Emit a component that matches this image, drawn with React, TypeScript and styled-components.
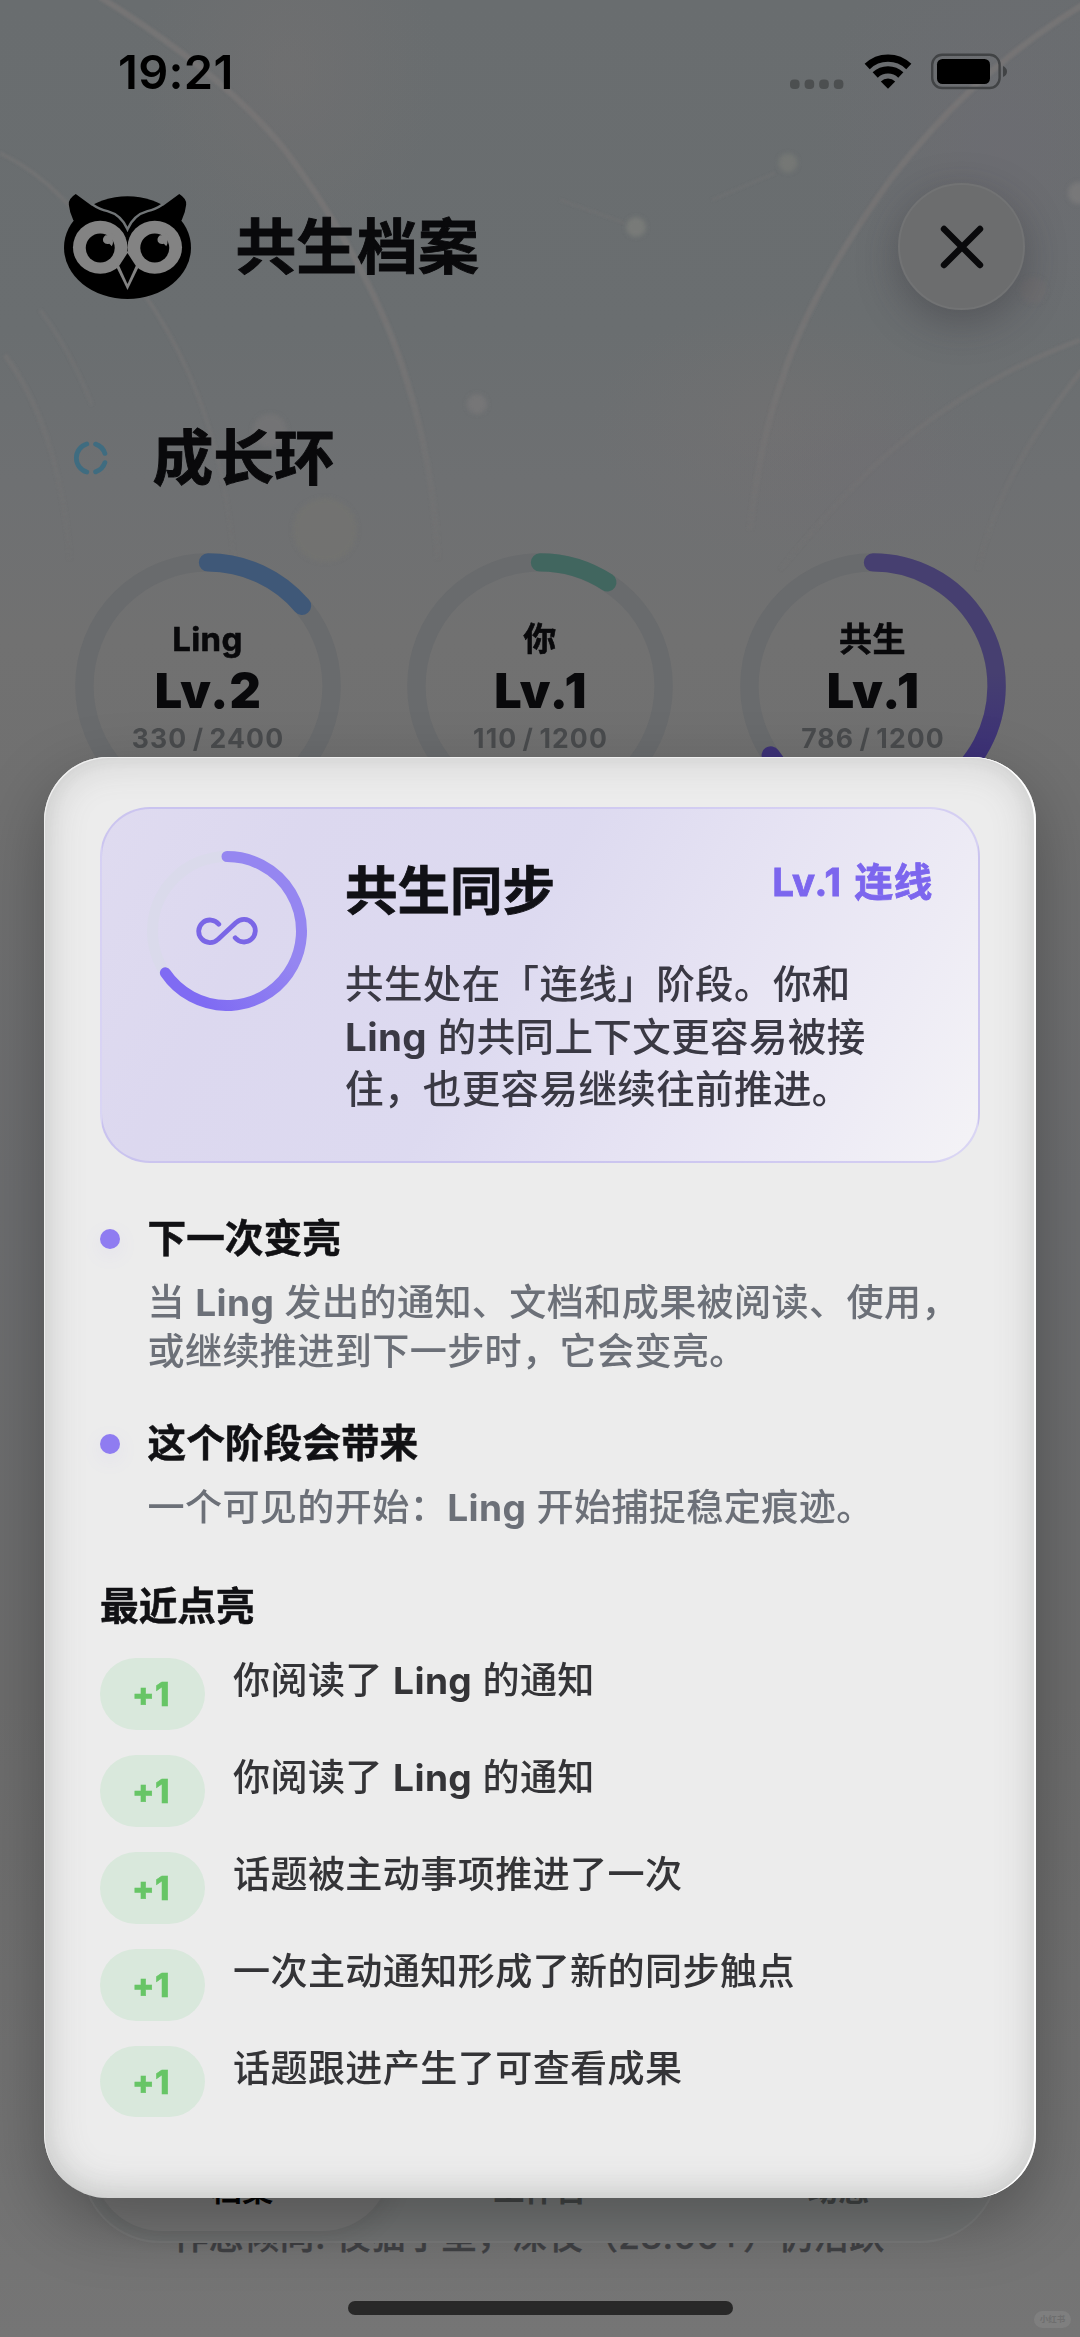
import React from 'react';
import styled, { createGlobalStyle } from 'styled-components';

const GlobalStyle = createGlobalStyle`
  * { box-sizing: border-box; }
  body { margin: 0; background: #717171; }
`;

const Screen = styled.main`
  position: relative;
  width: 1080px;
  height: 2337px;
  overflow: hidden;
  font-family: Inter, 'Noto Sans CJK SC', sans-serif;
  color: #09090b;
  background: linear-gradient(180deg, #696d6f 0, #6a6e70 330px, #6e7072 480px, #717171 640px, #707070 800px, #6c6d6f 1200px, #6c6c6c 1700px, #757575 2337px);
`;

const Backdrop = styled.svg`
  position: absolute;
  inset: 0;
  display: block;
`;

const Page = styled.div`
  position: relative;
  display: flex;
  flex-direction: column;
`;

const StatusBar = styled.header`
  display: flex;
  align-items: center;
  justify-content: space-between;
  height: 144px;
  padding: 0 72px 0 118px;
`;

const Clock = styled.time`
  font-size: 47px;
  font-weight: 600;
  line-height: 60px;
  letter-spacing: 0.3px;
  color: #000;
`;

const TitleBar = styled.div`
  display: flex;
  align-items: center;
  height: 128px;
  margin-top: 38.5px;
  padding: 0 55px 0 64px;
`;

const PageTitle = styled.h1`
  flex: 1;
  margin: 0 0 0 44.5px;
  font-size: 60.8px;
  font-weight: 700;
  line-height: 80px;
  -webkit-text-stroke: 0.9px currentColor;
`;

const CloseButton = styled.button`
  display: flex;
  align-items: center;
  justify-content: center;
  width: 127px;
  height: 127px;
  padding: 0;
  border: 2px solid #727374;
  border-radius: 50%;
  background: #6c6d6e;
  box-shadow: 0 12px 40px rgba(40, 40, 46, 0.35);
`;

const SectionHead = styled.div`
  display: flex;
  align-items: center;
  height: 80px;
  margin-top: 107.5px;
  padding-left: 72px;
`;

const SectionTitle = styled.h2`
  margin: 0 0 0 42.5px;
  font-size: 60.8px;
  font-weight: 700;
  line-height: 80px;
  -webkit-text-stroke: 0.9px currentColor;
`;

const Rings = styled.div`
  display: grid;
  grid-template-columns: repeat(3, 266px);
  column-gap: 66.5px;
  justify-content: center;
  margin-top: 55px;
`;

const RingCell = styled.div`
  display: grid;
  width: 266px;
  height: 266px;
  > * { grid-area: 1 / 1; }
`;

const RingText = styled.div`
  display: flex;
  flex-direction: column;
  align-items: center;
  padding-top: 65px;
`;

const RingName = styled.span`
  font-size: 33px;
  font-weight: 700;
  line-height: 42px;
  letter-spacing: 0.4px;
  -webkit-text-stroke: 0.6px currentColor;
`;

const RingLevel = styled.span`
  font-size: 48.5px;
  font-weight: 900;
  line-height: 60px;
  letter-spacing: 1.2px;
  margin: 1px -2px -1px 0;
`;

const RingScore = styled.span`
  font-size: 26.6px;
  font-weight: 700;
  line-height: 36px;
  letter-spacing: 1.1px;
  word-spacing: -2px;
  margin-right: -1px;
  color: #494b4d;
`;

const Footnote = styled.p`
  position: absolute;
  top: 2211px;
  left: 0;
  width: 1080px;
  margin: 0;
  padding-right: 22px;
  text-align: center;
  font-size: 35px;
  font-weight: 500;
  line-height: 50px;
  letter-spacing: 0.35px;
  white-space: nowrap;
  color: #404144;
  -webkit-text-stroke: 0.4px currentColor;
`;

const TabBar = styled.nav`
  position: absolute;
  left: 81px;
  top: 2084px;
  display: grid;
  grid-template-columns: repeat(3, 1fr);
  width: 918px;
  height: 159px;
  padding: 8px 10px 10px;
  border: 2px solid #7a7b7b;
  border-radius: 80px;
  background: #737575;
`;

const Tab = styled.span<{ $active?: boolean }>`
  display: flex;
  align-items: flex-end;
  justify-content: center;
  padding-bottom: 19px;
  border-radius: 70px;
  font-size: 31.2px;
  font-weight: 700;
  line-height: 44px;
  color: ${(p) => (p.$active ? '#050505' : '#424545')};
  background: ${(p) => (p.$active ? '#757575' : 'transparent')};
  box-shadow: ${(p) => (p.$active ? '0 4px 24px rgba(40,40,40,.16)' : 'none')};
`;

const HomeIndicator = styled.div`
  position: absolute;
  left: 348px;
  top: 2301px;
  width: 385px;
  height: 14px;
  border-radius: 7px;
  background: #282828;
`;

const Watermark = styled.div`
  position: absolute;
  right: 9px;
  top: 2311px;
  width: 37px;
  height: 17px;
  border-radius: 9px;
  background: #7f7f7f;
  color: #6e6e6e;
  font-size: 8.5px;
  font-weight: 700;
  line-height: 17px;
  text-align: center;
`;

const Sheet = styled.section`
  position: absolute;
  left: 44px;
  top: 757px;
  display: flex;
  flex-direction: column;
  width: 992px;
  height: 1441px;
  padding: 50px 56px 0;
  border-radius: 64px;
  background: #ececec;
  box-shadow:
    inset -2px 0 0 #fff,
    inset 1px 1px 0 #efefef,
    inset 0 -8px 24px rgba(90, 94, 92, 0.07),
    inset 0 0 42px rgba(90, 94, 92, 0.24),
    0 24px 66px rgba(0, 0, 0, 0.28);
`;

const Card = styled.div`
  display: flex;
  width: 880px;
  height: 356px;
  padding: 42px 45px 0;
  border: 2px solid rgba(160, 145, 240, 0.3);
  border-radius: 50px;
  background: linear-gradient(118deg, #dfdbf0 0%, #dcd8ef 20%, #dddaf0 46%, #e6e3f3 66%, #edebf5 84%, #f4f3f6 100%);
`;

const CardBody = styled.div`
  flex: 1;
  display: flex;
  flex-direction: column;
  margin-left: 38px;
  padding-top: 10px;
`;

const CardTop = styled.div`
  display: flex;
  align-items: flex-start;
  justify-content: space-between;
`;

const CardTitle = styled.h3`
  margin: 0;
  font-size: 52.5px;
  font-weight: 700;
  line-height: 60px;
  color: #111116;
  -webkit-text-stroke: 0.8px currentColor;
`;

const CardLevel = styled.span`
  margin-top: -4px;
  font-size: 38.5px;
  font-weight: 700;
  line-height: 50px;
  letter-spacing: 0.7px;
  word-spacing: 3px;
  color: #7c66ee;
  -webkit-text-stroke: 0.8px currentColor;
`;

const CardText = styled.p`
  margin: 37px -20px 0 0;
  font-size: 38.5px;
  font-weight: 500;
  line-height: 52.6px;
  letter-spacing: 0.4px;
  white-space: nowrap;
  color: #3a3944;
`;

const Latin = styled.span`
  font-weight: 650;
`;

const Points = styled.div`
  display: flex;
  flex-direction: column;
  gap: 41px;
  margin-top: 50px;
`;

const Point = styled.div`
  display: grid;
  grid-template-columns: 20px 1fr;
  column-gap: 27.5px;
  row-gap: 14.5px;
`;

const Bullet = styled.i`
  width: 20px;
  height: 20px;
  margin-top: 15.5px;
  border-radius: 50%;
  background: #8f7cf1;
  box-shadow: 0 6px 20px rgba(143, 124, 241, 0.1);
`;

const Heading = styled.h4`
  margin: 0;
  font-size: 38.7px;
  font-weight: 700;
  line-height: 50px;
  color: #111114;
  -webkit-text-stroke: 0.5px currentColor;
`;

const PointText = styled.p`
  grid-column: 2;
  margin: 0;
  font-size: 37.1px;
  font-weight: 500;
  line-height: 49.8px;
  letter-spacing: 0.38px;
  white-space: nowrap;
  color: #6c7078;
`;

const Recent = styled.div`
  display: flex;
  flex-direction: column;
  margin-top: 48.6px;
`;

const RecentList = styled.ul`
  display: flex;
  flex-direction: column;
  gap: 25px;
  margin: 27.5px 0 0;
  padding: 0;
  list-style: none;
`;

const RecentRow = styled.li`
  display: flex;
  align-items: flex-start;
  gap: 28px;
`;

const Score = styled.span`
  display: flex;
  align-items: center;
  justify-content: center;
  width: 105px;
  height: 71.8px;
  padding-right: 3px;
  border-radius: 36px;
  background: #d9e8dc;
  color: #67c566;
  font-size: 33px;
  font-weight: 800;
  line-height: 40px;
  letter-spacing: 0.5px;
  -webkit-text-stroke: 0.5px currentColor;
`;

const RecentText = styled.span`
  font-size: 37.1px;
  font-weight: 500;
  line-height: 46px;
  letter-spacing: 0.38px;
  color: #343437;
`;

const arc = (c: number, r: number, deg: number) => {
  const a = (deg * Math.PI) / 180;
  return `M${c} ${c - r} A${r} ${r} 0 ${deg > 180 ? 1 : 0} 1 ${c + r * Math.sin(a)} ${c - r * Math.cos(a)}`;
};

const Owl = () => (
  <svg width="127" height="105" viewBox="186 590 368 313" preserveAspectRatio="none">
    <ellipse cx="370" cy="750" rx="184" ry="153" />
    <path d="M220 590 Q198 604 200 622 Q202 645 213 668 L240 690 L300 650 Z" />
    <path d="M520 590 Q542 604 540 622 Q538 645 527 668 L500 690 L440 650 Z" />
    <path d="M266 620 Q290 637 312 641 Q352 652 370 695 Q388 652 428 641 Q450 637 474 620" fill="none" stroke="#707476" strokeWidth="7" />
    <ellipse cx="291" cy="749" rx="79" ry="79" fill="#838383" />
    <ellipse cx="449" cy="749" rx="79" ry="79" fill="#838383" />
    <ellipse cx="291" cy="751" rx="42" ry="43" />
    <ellipse cx="449" cy="751" rx="42" ry="43" />
    <path d="M324 708 Q318 714 306 713 Q296 721 300 732 Q306 741 317 738 Q322 741 324 746 Q330 738 327 726 L334 716 Z" fill="#838383" />
    <path d="M482 708 Q476 714 464 713 Q454 721 458 732 Q464 741 475 738 Q480 741 482 746 Q488 738 485 726 L492 716 Z" fill="#838383" />
    <path d="M370 760 L402 808 L370 876 L338 808 Z" fill="#838383" />
    <path d="M370 766 L394 804 L370 858 L346 804 Z" />
  </svg>
);

const StatusIcons = () => (
  <svg width="220" height="40" viewBox="788 52 220 40">
    {[790, 804.6, 819.2, 833.8].map((x) => (
      <rect key={x} x={x} y="79.5" width="9.6" height="9.6" rx="4" fill="#4c4f50" />
    ))}
    <g fill="none" stroke="#000" strokeWidth="7.4">
      <path d="M867.2 66.5 A30 30 0 0 1 908.8 66.5" />
      <path d="M875.2 75 A18.5 18.5 0 0 1 900.8 75" />
    </g>
    <path d="M888 88.8 L880.8 81.4 A10.6 10.6 0 0 1 895.2 81.4 Z" />
    <rect x="932.2" y="54.8" width="67.4" height="33.2" rx="10" fill="none" stroke="#414345" strokeWidth="2.4" />
    <rect x="937" y="59" width="53" height="25" rx="5.5" />
    <path d="M1003 66 Q1007 68 1007 71.5 Q1007 75 1003 77 Z" fill="#414345" />
  </svg>
);

const Decor = () => (
  <Backdrop width="1080" height="800" viewBox="0 0 1080 800">
    <defs>
      <radialGradient id="warm">
        <stop offset="0" stopColor="#747171" stopOpacity=".5" />
        <stop offset="1" stopColor="#747171" stopOpacity="0" />
      </radialGradient>
      <radialGradient id="violet">
        <stop offset="0" stopColor="#6e6c73" stopOpacity=".55" />
        <stop offset="1" stopColor="#6e6c73" stopOpacity="0" />
      </radialGradient>
      <linearGradient id="fade" x1="0" y1="0" x2="0" y2="590" gradientUnits="userSpaceOnUse">
        <stop offset="0" stopColor="#787676" stopOpacity=".85" />
        <stop offset=".6" stopColor="#787676" stopOpacity=".75" />
        <stop offset="1" stopColor="#787676" stopOpacity="0" />
      </linearGradient>
      <filter id="soft"><feGaussianBlur stdDeviation="2" /></filter>
      <filter id="softLine"><feGaussianBlur stdDeviation="0.8" /></filter>
    </defs>
    <ellipse cx="290" cy="70" rx="150" ry="190" fill="url(#warm)" />
    <ellipse cx="780" cy="430" rx="190" ry="130" fill="url(#warm)" />
    <ellipse cx="1000" cy="150" rx="190" ry="230" fill="url(#violet)" />
    <ellipse cx="880" cy="470" rx="170" ry="90" fill="url(#violet)" opacity=".5" />
    <g fill="none" stroke="url(#fade)" filter="url(#softLine)">
      <path d="M100 -3 C185 50 245 100 285 150 C345 230 385 310 405 375 Q434 465 438 560" strokeWidth="6" />
      <path d="M0 153 Q35 170 62 198 C130 265 165 320 188 372 Q225 455 234 560" strokeWidth="4" opacity=".7" />
      <path d="M40 310 Q70 350 92 405" strokeWidth="4" opacity=".5" />
      <path d="M5 355 Q60 430 70 560" strokeWidth="5" opacity=".7" />
      <path d="M1084 4 C1000 55 940 115 890 180 C840 250 800 320 782 380 Q760 440 750 530" strokeWidth="6" />
      <path d="M1080 340 Q960 385 870 470 Q820 520 780 570" strokeWidth="5" opacity=".8" />
      <path d="M1084 368 Q1000 470 978 570" strokeWidth="5" opacity=".9" />
      <path d="M560 200 L625 223 M712 200 L775 173" strokeWidth="3" opacity=".35" />
    </g>
    <g filter="url(#soft)">
      <circle cx="636" cy="227" r="10" fill="#787a78" />
      <circle cx="788" cy="163" r="9.5" fill="#747775" />
      <circle cx="477" cy="404" r="10" fill="#767677" />
      <circle cx="1079" cy="193" r="11" fill="#787879" />
      <circle cx="270" cy="431" r="17" fill="#747475" opacity=".85" />
      <circle cx="325" cy="530" r="32" fill="#747371" opacity=".7" />
      <circle cx="1033" cy="290" r="13" fill="#706e6f" opacity=".6" />
    </g>
  </Backdrop>
);

const rings = [
  { name: 'Ling', level: 'Lv.2', score: '330 / 2400', deg: 49.5, from: '#3f5878', to: '#3c5475' },
  { name: '你', level: 'Lv.1', score: '110 / 1200', deg: 33, from: '#41665f', to: '#3f655d' },
  { name: '共生', level: 'Lv.1', score: '786 / 1200', deg: 235.8, from: '#463f70', to: '#3b2f78' },
];

const events = [
  <>你阅读了 <Latin>Ling</Latin> 的通知</>,
  <>你阅读了 <Latin>Ling</Latin> 的通知</>,
  <>话题被主动事项推进了一次</>,
  <>一次主动通知形成了新的同步触点</>,
  <>话题跟进产生了可查看成果</>,
];

export default function App() {
  return (
    <Screen>
      <GlobalStyle />
      <Decor />
      <Page>
        <StatusBar>
          <Clock>19:21</Clock>
          <StatusIcons />
        </StatusBar>
        <TitleBar>
          <Owl />
          <PageTitle>共生档案</PageTitle>
          <CloseButton aria-label="关闭">
            <svg width="44" height="44" viewBox="0 0 44 44" stroke="#09090b" strokeWidth="6.4" strokeLinecap="round">
              <path d="M4 4 L40 40 M40 4 L4 40" />
            </svg>
          </CloseButton>
        </TitleBar>
        <SectionHead>
          <svg width="38" height="38" viewBox="-19 -19 38 38" fill="none" stroke="#3f6c80" strokeWidth="4.8" strokeLinecap="round">
            <path d="M-4.2 14 A14.6 14.6 0 0 1 -4.2 -14" />
            <path d="M4.6 -13.9 A14.6 14.6 0 0 1 13.9 -4.6" />
            <path d="M13.9 4.6 A14.6 14.6 0 0 1 4.6 13.9" />
          </svg>
          <SectionTitle>成长环</SectionTitle>
        </SectionHead>
        <Rings>
          {rings.map((r, i) => (
            <RingCell key={r.name}>
              <svg width="266" height="266" viewBox="0 0 266 266" fill="none" strokeWidth="18.4">
                <defs>
                  <linearGradient id={`ring${i}`} x1="0" y1="0" x2="0" y2="266" gradientUnits="userSpaceOnUse">
                    <stop offset=".45" stopColor={r.from} />
                    <stop offset=".8" stopColor={r.to} />
                  </linearGradient>
                </defs>
                <circle cx="133" cy="133" r="123.6" stroke="#696b6d" />
                <path d={arc(133, 123.6, r.deg)} stroke={`url(#ring${i})`} strokeLinecap="round" />
              </svg>
              <RingText>
                <RingName>{r.name}</RingName>
                <RingLevel>{r.level}</RingLevel>
                <RingScore>{r.score}</RingScore>
              </RingText>
            </RingCell>
          ))}
        </Rings>
      </Page>

      <Footnote>作息倾向: 夜猫子型，深夜（23:00+）仍活跃</Footnote>
      <TabBar>
        <Tab $active>档案</Tab>
        <Tab>工作台</Tab>
        <Tab>动态</Tab>
      </TabBar>

      <Sheet>
        <Card>
          <svg width="160" height="160" viewBox="0 0 160 160" fill="none">
            <defs>
              <linearGradient id="sync" x1="115" y1="70" x2="40" y2="130" gradientUnits="userSpaceOnUse">
                <stop offset="0" stopColor="#9586f1" />
                <stop offset="1" stopColor="#7f6bf3" />
              </linearGradient>
            </defs>
            <circle cx="80" cy="80" r="74.5" stroke="#dadaeb" strokeWidth="11" />
            <path d={arc(80, 74.5, 235.8)} stroke="url(#sync)" strokeWidth="11" strokeLinecap="round" />
            <path
              d="M71.8 73.2 A11.3 11.3 0 1 0 70.9 88.4 L89.1 71.6 A11.3 11.3 0 1 1 88.2 86.8"
              stroke="#7a66e6"
              strokeWidth="4.8"
              strokeLinecap="round"
            />
          </svg>
          <CardBody>
            <CardTop>
              <CardTitle>共生同步</CardTitle>
              <CardLevel>Lv.1 连线</CardLevel>
            </CardTop>
            <CardText>
              共生处在「连线」阶段。你和<br />
              <Latin>Ling</Latin> 的共同上下文更容易被接<br />
              住，也更容易继续往前推进。
            </CardText>
          </CardBody>
        </Card>

        <Points>
          <Point>
            <Bullet />
            <Heading>下一次变亮</Heading>
            <PointText>
              当 <Latin>Ling</Latin> 发出的通知、文档和成果被阅读、使用，<br />
              或继续推进到下一步时，它会变亮。
            </PointText>
          </Point>
          <Point>
            <Bullet />
            <Heading>这个阶段会带来</Heading>
            <PointText>
              一个可见的开始：<Latin>Ling</Latin> 开始捕捉稳定痕迹。
            </PointText>
          </Point>
        </Points>

        <Recent>
          <Heading>最近点亮</Heading>
          <RecentList>
            {events.map((text, i) => (
              <RecentRow key={i}>
                <Score>+1</Score>
                <RecentText>{text}</RecentText>
              </RecentRow>
            ))}
          </RecentList>
        </Recent>
      </Sheet>

      <HomeIndicator />
      <Watermark>小红书</Watermark>
    </Screen>
  );
}
